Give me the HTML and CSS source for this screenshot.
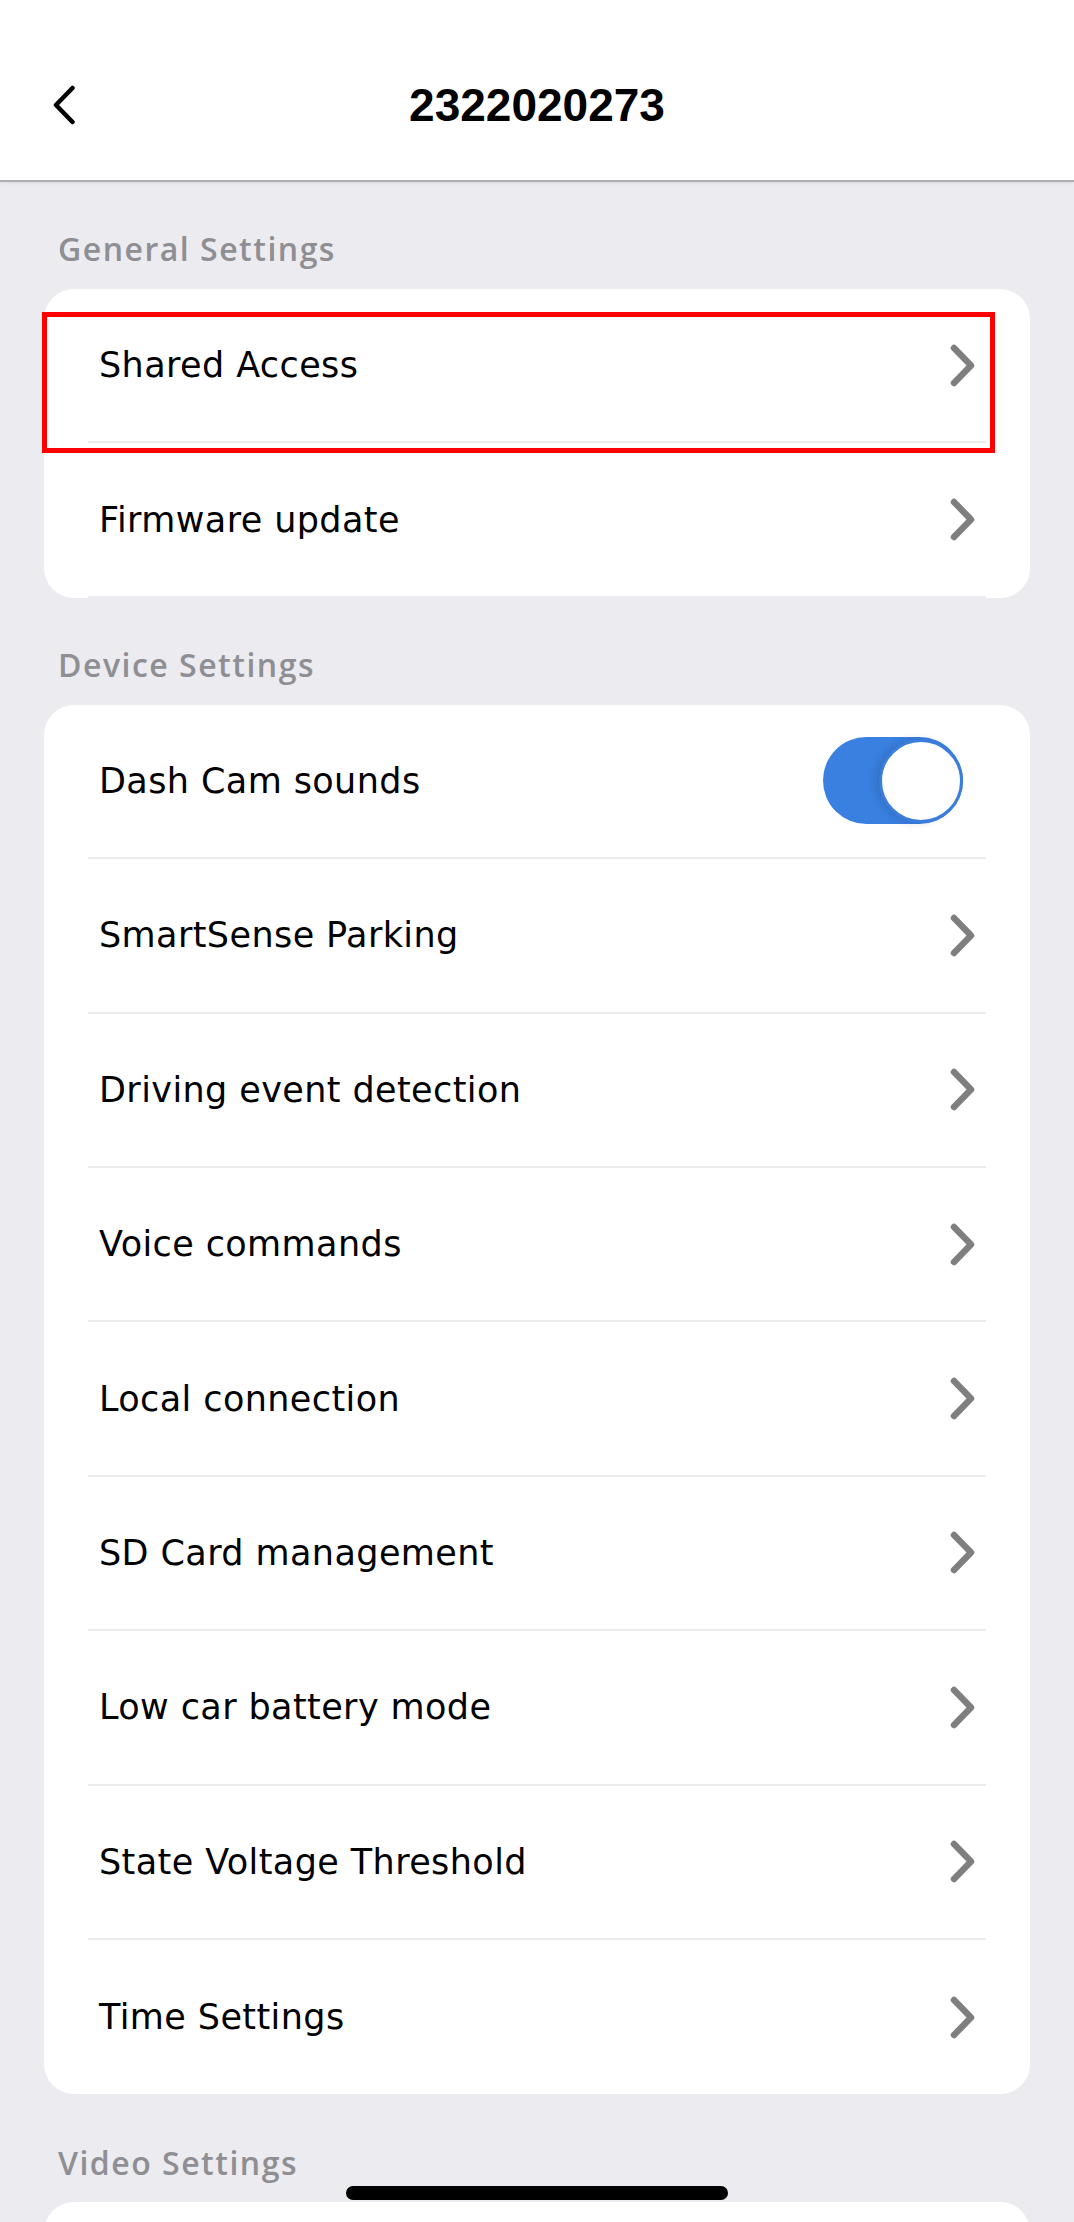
FILE: index.html
```html
<!DOCTYPE html>
<html lang="en">
<head>
<meta charset="utf-8">
<title>2322020273</title>
<link rel="stylesheet" href="styles.css">
</head>
<body>
<header class="topbar">
  <div class="topbar-left">
    <svg class="back-icon" width="24" height="40" viewBox="0 0 24 40" aria-label="Back">
      <polyline points="20.5,3 4,20 20.5,37" fill="none" stroke="#000" stroke-width="4.5" stroke-linecap="round" stroke-linejoin="round"/>
    </svg>
  </div>
  <h1 class="title">2322020273</h1>
  <div class="topbar-right"></div>
</header>

<main class="content">
  <h2 class="section-label">General Settings</h2>
  <section class="card">
    <div class="row">
      <span class="row-text">Shared Access</span>
      <svg class="chevron" width="25" height="43" viewBox="0 0 25 43"><polyline points="4,4 21,21.5 4,39" fill="none" stroke="#7f7f7f" stroke-width="6.5" stroke-linecap="round" stroke-linejoin="round"/></svg>
    </div>
    <div class="row">
      <span class="row-text">Firmware update</span>
      <svg class="chevron" width="25" height="43" viewBox="0 0 25 43"><polyline points="4,4 21,21.5 4,39" fill="none" stroke="#7f7f7f" stroke-width="6.5" stroke-linecap="round" stroke-linejoin="round"/></svg>
    </div>
    <div class="highlight"></div>
  </section>

  <h2 class="section-label">Device Settings</h2>
  <section class="card">
    <div class="row">
      <span class="row-text">Dash Cam sounds</span>
      <div class="toggle"><div class="knob"></div></div>
    </div>
    <div class="row">
      <span class="row-text">SmartSense Parking</span>
      <svg class="chevron" width="25" height="43" viewBox="0 0 25 43"><polyline points="4,4 21,21.5 4,39" fill="none" stroke="#7f7f7f" stroke-width="6.5" stroke-linecap="round" stroke-linejoin="round"/></svg>
    </div>
    <div class="row">
      <span class="row-text">Driving event detection</span>
      <svg class="chevron" width="25" height="43" viewBox="0 0 25 43"><polyline points="4,4 21,21.5 4,39" fill="none" stroke="#7f7f7f" stroke-width="6.5" stroke-linecap="round" stroke-linejoin="round"/></svg>
    </div>
    <div class="row">
      <span class="row-text">Voice commands</span>
      <svg class="chevron" width="25" height="43" viewBox="0 0 25 43"><polyline points="4,4 21,21.5 4,39" fill="none" stroke="#7f7f7f" stroke-width="6.5" stroke-linecap="round" stroke-linejoin="round"/></svg>
    </div>
    <div class="row">
      <span class="row-text">Local connection</span>
      <svg class="chevron" width="25" height="43" viewBox="0 0 25 43"><polyline points="4,4 21,21.5 4,39" fill="none" stroke="#7f7f7f" stroke-width="6.5" stroke-linecap="round" stroke-linejoin="round"/></svg>
    </div>
    <div class="row">
      <span class="row-text">SD Card management</span>
      <svg class="chevron" width="25" height="43" viewBox="0 0 25 43"><polyline points="4,4 21,21.5 4,39" fill="none" stroke="#7f7f7f" stroke-width="6.5" stroke-linecap="round" stroke-linejoin="round"/></svg>
    </div>
    <div class="row">
      <span class="row-text">Low car battery mode</span>
      <svg class="chevron" width="25" height="43" viewBox="0 0 25 43"><polyline points="4,4 21,21.5 4,39" fill="none" stroke="#7f7f7f" stroke-width="6.5" stroke-linecap="round" stroke-linejoin="round"/></svg>
    </div>
    <div class="row">
      <span class="row-text">State Voltage Threshold</span>
      <svg class="chevron" width="25" height="43" viewBox="0 0 25 43"><polyline points="4,4 21,21.5 4,39" fill="none" stroke="#7f7f7f" stroke-width="6.5" stroke-linecap="round" stroke-linejoin="round"/></svg>
    </div>
    <div class="row">
      <span class="row-text">Time Settings</span>
      <svg class="chevron" width="25" height="43" viewBox="0 0 25 43"><polyline points="4,4 21,21.5 4,39" fill="none" stroke="#7f7f7f" stroke-width="6.5" stroke-linecap="round" stroke-linejoin="round"/></svg>
    </div>
  </section>

  <h2 class="section-label section-label-last">Video Settings</h2>
  <section class="card card-video"></section>
</main>

<div class="home-indicator"></div>
</body>
</html>
```

FILE: styles.css
```css
* {
  box-sizing: border-box;
}

html, body {
  margin: 0;
  padding: 0;
}

body {
  background: #ebebf0;
  font-family: "DejaVu Sans", "Open Sans", sans-serif;
  color: #000;
  overflow: hidden;
}

.topbar {
  height: 182px;
  background: #fff;
  border-bottom: 2px solid #adadb1;
  box-shadow: 0 1px 3px rgba(0, 0, 0, 0.08);
  display: grid;
  grid-template-columns: 1fr auto 1fr;
  align-items: center;
  padding-top: 30px;
}

.topbar-left {
  padding-left: 52px;
  display: flex;
  align-items: center;
}

.back-icon {
  display: block;
}

.title {
  margin: 0;
  font-family: "Liberation Sans", Arial, sans-serif;
  font-weight: 700;
  font-size: 46px;
  line-height: 56px;
  color: #000;
}

.content {
  padding: 0 44px;
}

.section-label {
  margin: 0;
  padding: 47px 0 0 14px;
  height: 107px;
  font-family: "Open Sans", sans-serif;
  font-weight: 600;
  font-size: 32px;
  line-height: 40px;
  letter-spacing: 1.5px;
  color: #8e8e93;
}

.section-label-last {
  padding-top: 49px;
  height: 108px;
}

.card {
  position: relative;
  background: #fff;
  border-radius: 30px;
  padding: 0 44px;
}

.row {
  height: 154.4px;
  display: flex;
  align-items: center;
  justify-content: space-between;
  padding: 0 11px;
  border-bottom: 2px solid #ececef;
}

.row:last-of-type {
  border-bottom: none;
}

.row-text {
  font-size: 35px;
  letter-spacing: 0.4px;
  color: #000;
}

.chevron {
  display: block;
  flex: none;
}

.toggle {
  width: 140px;
  height: 87px;
  border-radius: 44px;
  background: #3a80e0;
  margin-right: 12px;
  display: flex;
  align-items: center;
  justify-content: flex-end;
}

.knob {
  width: 84px;
  height: 84px;
  border-radius: 50%;
  background: #fff;
  border: 3px solid #3a7ddc;
  box-shadow: -4px 0 8px rgba(0, 0, 0, 0.12);
}

.highlight {
  position: absolute;
  left: -2px;
  top: 23px;
  width: 953px;
  height: 141px;
  border: 5px solid #ff0000;
  pointer-events: none;
}

.card-video {
  height: 154px;
}

.home-indicator {
  position: fixed;
  left: 346px;
  bottom: 22px;
  width: 382px;
  height: 14px;
  border-radius: 7px;
  background: #000;
}
```
